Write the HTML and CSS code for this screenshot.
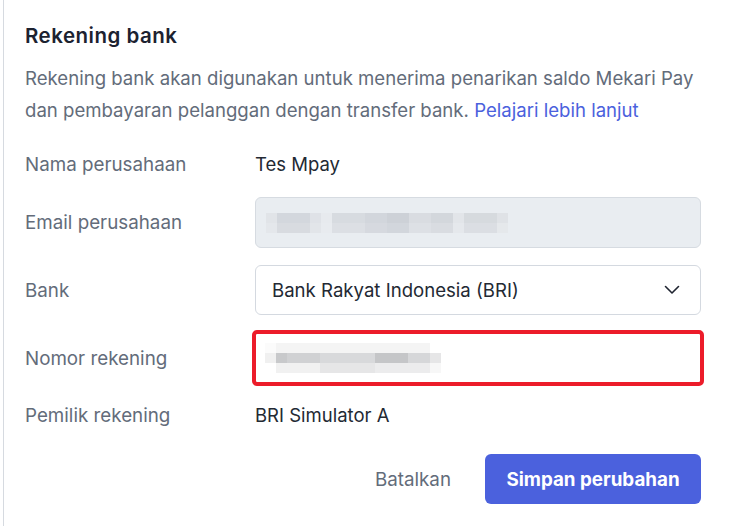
FILE: index.html
```html
<!DOCTYPE html>
<html>
<head>
<meta charset="utf-8">
<link rel="stylesheet" href="styles.css">
</head>
<body>
<div class="panel">
  <h2 class="title">Rekening bank</h2>
  <p class="desc">Rekening bank akan digunakan untuk menerima penarikan saldo Mekari Pay dan pembayaran pelanggan dengan transfer bank. <a class="link" href="#">Pelajari lebih lanjut</a></p>

  <div class="row row-nama">
    <div class="label">Nama perusahaan</div>
    <div class="value">Tes Mpay</div>
  </div>

  <div class="row row-email">
    <div class="label">Email perusahaan</div>
    <div class="field field-disabled">
      <div class="blur blur-email">
        <div class="brow e1"></div>
        <div class="brow e2"></div>
      </div>
    </div>
  </div>

  <div class="row row-bank">
    <div class="label">Bank</div>
    <div class="field field-select">
      <span class="select-text">Bank Rakyat Indonesia (BRI)</span>
      <svg class="chevron" width="16" height="10" viewBox="0 0 16 10"><path d="M1.5 1.5 L8 8 L14.5 1.5" fill="none" stroke="#1f2430" stroke-width="1.6" stroke-linecap="round" stroke-linejoin="round"/></svg>
    </div>
  </div>

  <div class="row row-nomor">
    <div class="label">Nomor rekening</div>
    <div class="field field-marked">
      <div class="blur blur-nomor">
        <div class="brow r1"></div>
        <div class="brow r2"></div>
        <div class="brow r3"></div>
      </div>
    </div>
  </div>

  <div class="row row-pemilik">
    <div class="label">Pemilik rekening</div>
    <div class="value">BRI Simulator A</div>
  </div>

  <div class="actions">
    <button class="btn btn-ghost">Batalkan</button>
    <button class="btn btn-primary">Simpan perubahan</button>
  </div>
</div>
</body>
</html>
```

FILE: styles.css
```css
* { box-sizing: border-box; }
html, body { margin: 0; padding: 0; background: #fff; }
body {
  font-family: Inter, "Noto Sans", "Liberation Sans", sans-serif;
  padding-left: 3px;
  height: 526px;
  overflow: hidden;
}
.panel {
  border-left: 1px solid #d6dae0;
  height: 526px;
  padding: 22px 0 0 21px;
  display: flex;
  flex-direction: column;
}
.title {
  margin: 0;
  font-size: 20.5px;
  line-height: 28px;
  font-weight: 600;
  letter-spacing: 0.5px;
  color: #1c2230;
}
.desc {
  margin: 12px 0 0;
  width: 686px;
  font-size: 18.6px;
  line-height: 32px;
  color: #636c7a;
}
.link { color: #4b61dd; text-decoration: none; }

.row {
  display: flex;
  align-items: center;
}
.label {
  width: 230px;
  font-size: 18.8px;
  color: #636c7a;
  flex: none;
}
.value {
  font-size: 18.5px;
  color: #232933;
}
.row-nama { margin-top: 26px; height: 24px; }
.row-email { margin-top: 21px; height: 51px; }
.row-bank { margin-top: 17px; height: 50px; }
.row-nomor { margin-top: 18px; height: 50px; }
.row-pemilik { margin-top: 20px; height: 24px; }

.field {
  width: 446px;
  height: 100%;
  border: 1px solid #d4d9e0;
  border-radius: 6px;
  display: flex;
  align-items: center;
  padding: 0 16px 0 16px;
}
.field-disabled { background: #e9edf1; border-color: #d6dbe1; padding-left: 10px; }
.field-select { justify-content: space-between; font-size: 18.6px; color: #232933; padding-right: 20px; }
.chevron { display: block; }
.field-marked {
  border-radius: 2px;
  outline: 4px solid #ec1c2a;
  outline-offset: -1px;
  padding-left: 9px;
}

.blur { display: flex; flex-direction: column; }
.brow { height: 10px; }
.e1 { width: 242px; background: linear-gradient(90deg,
  #e1e4e8 0 11px, #d3d7dd 11px 44px, #dfe2e7 44px 55px, #e7eaee 55px 66px,
  #d7dbe0 66px 99px, #d2d6dc 99px 121px, #cdd1d7 121px 143px, #d9dce1 143px 165px,
  #d3d7dc 165px 187px, #e2e5e9 187px 198px, #d6dade 198px 231px, #dfe2e6 231px 242px); }
.e2 { width: 242px; background: linear-gradient(90deg,
  #e4e7eb 0 11px, #d8dbe0 11px 44px, #e2e5e9 44px 55px, #e8ebef 55px 66px,
  #dcdfe4 66px 99px, #d6d9df 99px 121px, #d2d6dc 121px 143px, #dde0e5 143px 165px,
  #d9dce1 165px 187px, #e5e8ec 187px 198px, #dbdee3 198px 231px, #e5e8eb 231px 242px); }

.r1 { width: 165px; background: linear-gradient(90deg, #fbfbfb 0 11px, #f4f4f4 11px 100%); }
.r2 { width: 176px; background: linear-gradient(90deg, #f0f0f0 0 11px, #c8c9cb 11px 22px, #d0d1d3 22px 55px, #d8d9db 55px 110px, #c5c6c8 110px 143px, #d6d7d9 143px 165px, #e6e6e7 165px 176px); }
.r3 { width: 176px; background: linear-gradient(90deg, #fff 0 11px, #f1f1f1 11px 55px, #e6e6e7 55px 110px, #ececed 110px 165px, #f7f7f7 165px 176px); }

.actions {
  margin-top: 27px;
  width: 676px;
  display: flex;
  justify-content: flex-end;
  align-items: center;
  gap: 34px;
}
.btn {
  font-family: inherit;
  font-size: 18.8px;
  border: 0;
  cursor: pointer;
}
.btn-ghost {
  background: none;
  color: #636c7a;
  padding: 0;
}
.btn-primary {
  background: #4b61dd;
  color: #fff;
  font-weight: 700;
  height: 50px;
  width: 216px;
  border-radius: 6px;
}
```
